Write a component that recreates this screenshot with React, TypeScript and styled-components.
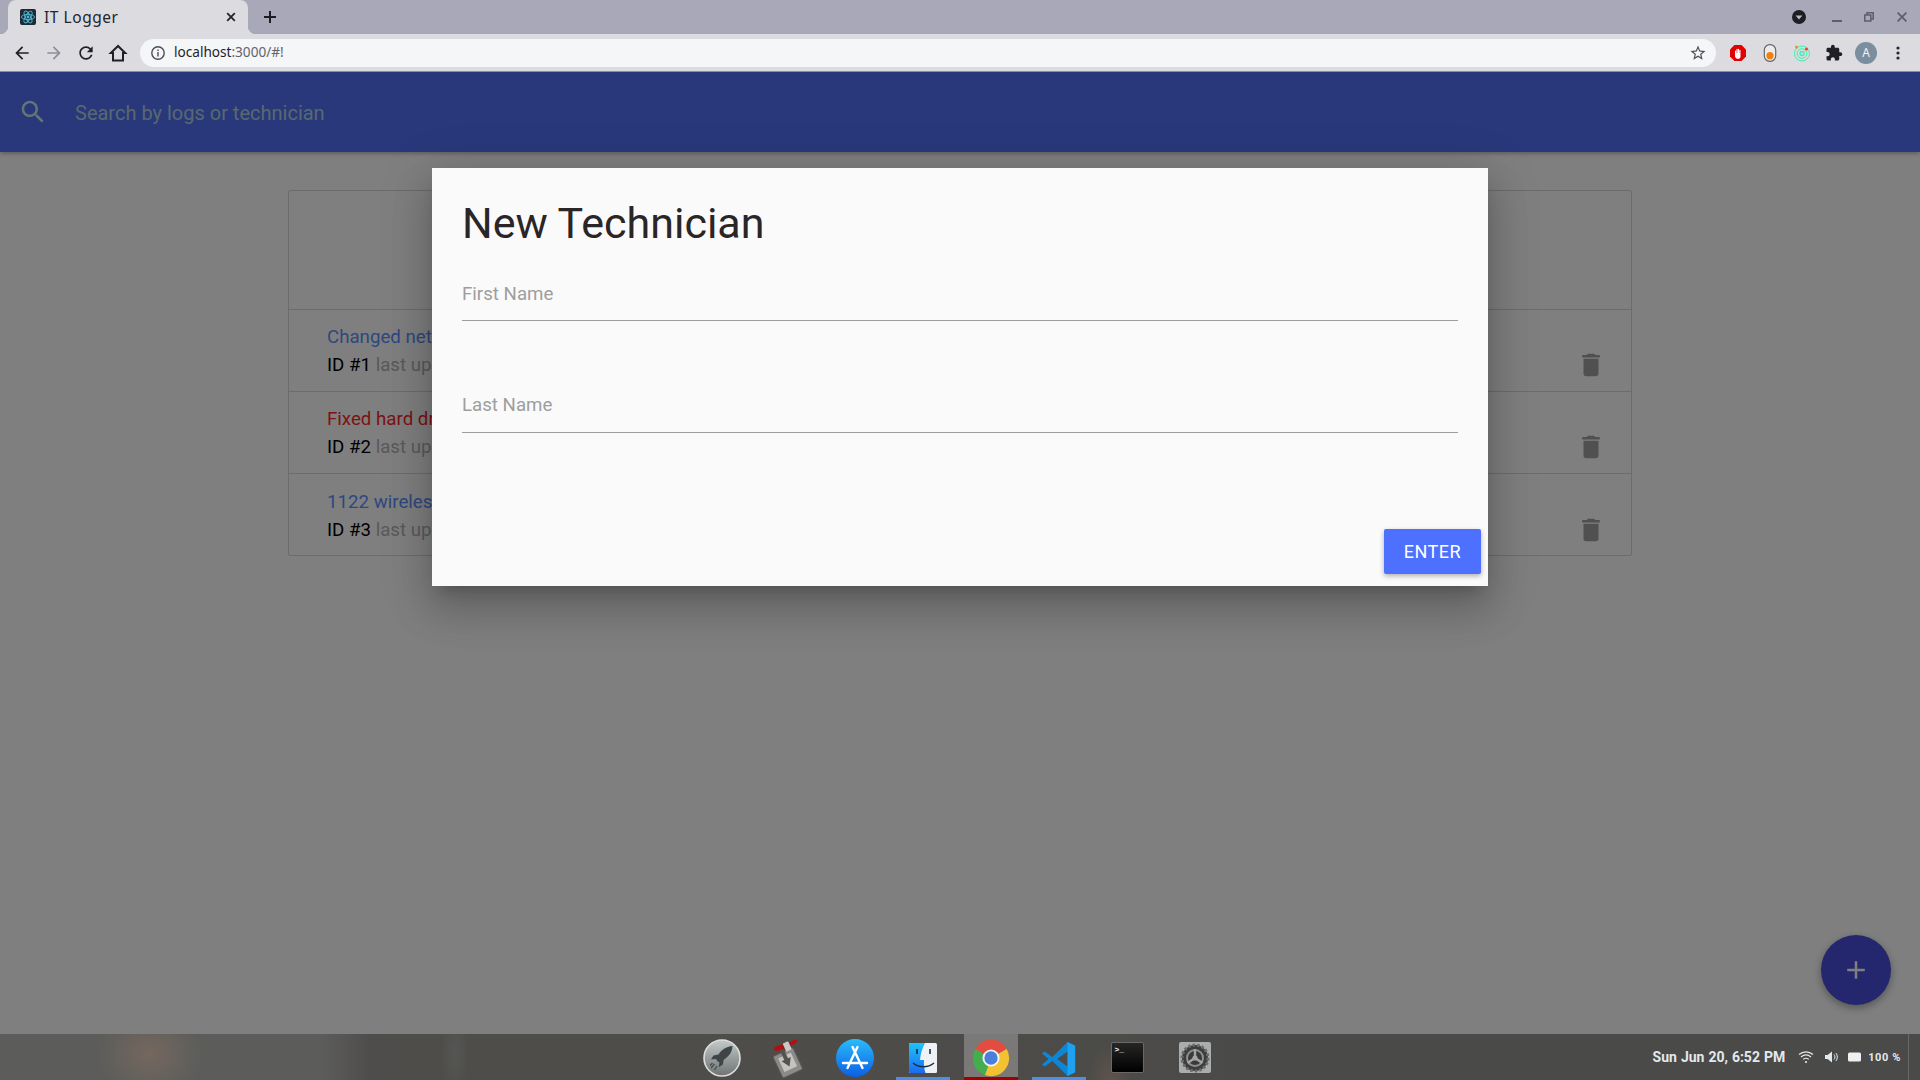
import React from "react";
import styled, { createGlobalStyle } from "styled-components";

const Global = createGlobalStyle`
  html, body { margin: 0; padding: 0; height: 100%; overflow: hidden; background: #fff; }
  * { box-sizing: border-box; }
  body { font-family: Roboto, "Liberation Sans", sans-serif; }
`;

const Screen = styled.div`
  width: 1920px;
  height: 1080px;
  display: flex;
  flex-direction: column;
  overflow: hidden;
`;

const TabStrip = styled.div`
  height: 34px;
  flex: none;
  background: #a9a8b9;
  display: flex;
  align-items: flex-end;
  padding-left: 8px;
  padding-right: 2px;
`;

const Tab = styled.div`
  position: relative;
  width: 240px;
  height: 34px;
  background: #dcdbe0;
  border-radius: 8px 8px 0 0;
  display: flex;
  align-items: center;
  padding: 0 12px;
  &::before, &::after {
    content: "";
    position: absolute;
    bottom: 0;
    width: 8px;
    height: 8px;
  }
  &::before { left: -8px; background: radial-gradient(circle at 0 0, transparent 8px, #dcdbe0 8.5px); }
  &::after { right: -8px; background: radial-gradient(circle at 100% 0, transparent 8px, #dcdbe0 8.5px); }
`;

const TabTitle = styled.span`
  flex: 1;
  margin-left: 8px;
  margin-top: -1px;
  font-family: "Noto Sans", sans-serif;
  font-size: 15.5px;
  letter-spacing: 0.55px;
  color: #25252b;
`;

const NewTab = styled.div`
  width: 32px;
  height: 34px;
  margin-left: 6px;
  display: flex;
  align-items: center;
  justify-content: center;
`;

const WindowControls = styled.div`
  margin-left: auto;
  display: flex;
  align-items: center;
  height: 34px;
`;

const WindowSlot = styled.div<{ $gap?: number }>`
  width: 32px;
  height: 34px;
  display: flex;
  align-items: center;
  justify-content: center;
  margin-right: ${(p) => p.$gap ?? 0}px;
`;

const Toolbar = styled.div`
  height: 38px;
  flex: none;
  background: #dcdbe0;
  border-bottom: 1px solid #8d8c97;
  display: flex;
  align-items: center;
  padding: 0 6px;
`;

const ToolSlot = styled.div`
  width: 32px;
  height: 32px;
  flex: none;
  display: flex;
  align-items: center;
  justify-content: center;
`;

const UrlBar = styled.div`
  flex: 1;
  height: 28px;
  margin: 0 6px;
  border-radius: 14px;
  background: #f5f6f8;
  display: flex;
  align-items: center;
  padding: 0 9px 0 10px;
  font-family: "Noto Sans", sans-serif;
  font-size: 13.6px;
  line-height: 26px;
`;

const Host = styled.span`
  margin-left: 8px;
  margin-top: -1px;
  color: #1e1e24;
`;

const UrlRest = styled.span`
  margin-top: -1px;
  color: #62626c;
`;

const UrlEnd = styled.div`
  margin-left: auto;
  display: flex;
  align-items: center;
`;

const Avatar = styled.div`
  width: 22px;
  height: 22px;
  border-radius: 50%;
  background: #7a8e9e;
  color: #f2f4f6;
  font-family: "Noto Sans", sans-serif;
  font-size: 12px;
  display: flex;
  align-items: center;
  justify-content: center;
`;

const Page = styled.main`
  position: relative;
  flex: 1;
  overflow: hidden;
  background: #fff;
`;

const Navbar = styled.header`
  height: 80px;
  background: #5070f4;
  display: flex;
  align-items: center;
  padding-left: 18px;
  box-shadow: 0 2px 4px rgba(0, 0, 0, 0.25);
`;

const SearchText = styled.span`
  margin-left: 27px;
  padding-top: 2px;
  font-size: 20px;
  color: rgb(176, 208, 224);
`;

const Collection = styled.section`
  width: 1344px;
  margin: 38px auto 0;
  border: 1px solid #d8d8d8;
  border-radius: 2px;
`;

const CollectionHeader = styled.div`
  height: 119px;
  border-bottom: 1px solid #d8d8d8;
  display: flex;
  align-items: center;
  justify-content: center;
  font-size: 34px;
`;

const LogRow = styled.div`
  height: 82px;
  padding: 13px 25px 0 38px;
  display: flex;
  justify-content: space-between;
  font-size: 18.7px;
  border-bottom: 1px solid #d8d8d8;
  &:last-child { border-bottom: 0; height: 81px; padding-top: 14px; }
`;

const LogTitle = styled.div<{ $tone: string }>`
  line-height: 28px;
  color: ${(p) => p.$tone};
`;

const LogMeta = styled.div`
  line-height: 28px;
  color: #000;
`;

const MetaGrey = styled.span`
  color: #b4b4b4;
`;

const TrashSlot = styled.div`
  margin-top: 27px;
  height: 30px;
  color: #a0a0a0;
`;

const Fab = styled.div`
  position: absolute;
  right: 29px;
  bottom: 29px;
  width: 70px;
  height: 70px;
  border-radius: 50%;
  background: #484cdc;
  display: flex;
  align-items: center;
  justify-content: center;
  box-shadow: 0 3px 8px rgba(0, 0, 0, 0.35);
`;

const Overlay = styled.div`
  position: absolute;
  inset: 0;
  background: rgba(0, 0, 0, 0.5);
`;

const Modal = styled.div`
  position: absolute;
  left: 432px;
  top: 96px;
  width: 1056px;
  height: 418px;
  background: #fafafa;
  display: flex;
  flex-direction: column;
  padding: 30px 7px 12px 30px;
  box-shadow: 0 24px 38px 3px rgba(0, 0, 0, 0.14), 0 9px 46px 8px rgba(0, 0, 0, 0.12), 0 11px 15px -7px rgba(0, 0, 0, 0.2);
`;

const ModalTitle = styled.h4`
  margin: 0 0 27px;
  font-size: 43px;
  font-weight: 400;
  line-height: 50px;
  color: #2a2527;
`;

const Field = styled.input`
  display: block;
  width: 996px;
  height: 46px;
  flex: none;
  padding: 0 0 7px;
  margin-bottom: 66px;
  border: 0;
  border-bottom: 1px solid #9e9e9e;
  background: transparent;
  font: 400 18.7px Roboto, sans-serif;
  outline: none;
  &::placeholder { color: #9e9e9e; opacity: 1; }
  & + & { margin-bottom: 0; padding-bottom: 10px; }
`;

const EnterButton = styled.button`
  margin: auto 0 0 auto;
  width: 97px;
  height: 45px;
  border: 0;
  border-radius: 2px;
  background: #4d70ff;
  color: #fff;
  font: 400 18px Roboto, sans-serif;
  letter-spacing: 0.5px;
  box-shadow: 0 2px 5px rgba(0, 0, 0, 0.3);
`;

const Dock = styled.footer`
  position: relative;
  height: 46px;
  flex: none;
  display: flex;
  background:
    radial-gradient(ellipse 52px 44px at 150px 20px, rgba(150, 118, 98, 0.42), transparent),
    radial-gradient(ellipse 14px 40px at 455px 20px, rgba(105, 120, 120, 0.22), transparent),
    radial-gradient(ellipse 22px 40px at 1110px 50px, rgba(130, 95, 80, 0.4), transparent),
    linear-gradient(90deg, #5c5d5b 0, #5c5d5b 320px, #4f4d4b 370px, #4f4d4a 700px, #4a4a48 1300px, #4a4a48 100%);
  padding-left: 692px;
  padding-right: 11px;
`;

const DockApps = styled.div`
  display: flex;
  gap: 14px;
`;

const DockTile = styled.div<{ $active?: boolean; $bar?: string }>`
  width: 54px;
  height: 46px;
  display: flex;
  align-items: flex-start;
  justify-content: center;
  padding-top: 5px;
  background: ${(p) => (p.$active ? "#7b7977" : "transparent")};
  border-bottom: 3px solid ${(p) => p.$bar ?? "transparent"};
`;

const Status = styled.div`
  margin-left: auto;
  height: 46px;
  display: flex;
  align-items: center;
  color: #e3e8ee;
  border-right: 1px solid #6a6866;
  padding-right: 7px;
`;

const Clock = styled.span`
  font: 700 14px Roboto, sans-serif;
  margin-right: 13px;
  word-spacing: 0.5px;
`;

const Percent = styled.span`
  font: 700 11px Roboto, sans-serif;
  letter-spacing: 0.6px;
  margin-left: 6px;
`;

const StatusIcon = styled.svg<{ $after?: number }>`
  margin-right: ${(p) => p.$after ?? 10}px;
`;

const RocketTile = styled(DockTile)`
  padding-left: 6px;
`;

const Md = ({ d, size = 24, color = "currentColor" }: { d: string; size?: number; color?: string }) => (
  <svg width={size} height={size} viewBox="0 0 24 24" fill={color}>
    <path d={d} />
  </svg>
);

const ICON = {
  back: "M20 11H7.83l5.59-5.59L12 4l-8 8 8 8 1.41-1.41L7.83 13H20v-2z",
  forward: "M12 4l-1.41 1.41L16.17 11H4v2h12.17l-5.58 5.59L12 20l8-8z",
  reload: "M17.65 6.35C16.2 4.9 14.21 4 12 4c-4.42 0-7.99 3.58-7.99 8s3.57 8 7.99 8c3.73 0 6.84-2.55 7.73-6h-2.08c-.82 2.33-3.04 4-5.65 4-3.31 0-6-2.69-6-6s2.69-6 6-6c1.66 0 3.14.69 4.22 1.78L13 11h7V4l-2.35 2.35z",
  star: "M22 9.24l-7.19-.62L12 2 9.19 8.63 2 9.24l5.46 4.73L5.82 21 12 17.27 18.18 21l-1.63-7.03L22 9.24zM12 15.4l-3.76 2.27 1-4.28-3.32-2.88 4.38-.38L12 6.1l1.71 4.04 4.38.38-3.32 2.88 1 4.28L12 15.4z",
  puzzle: "M20.5 11H19V7c0-1.1-.9-2-2-2h-4V3.5C13 2.12 11.88 1 10.5 1S8 2.12 8 3.5V5H4c-1.1 0-1.99.9-1.99 2v3.8H3.5c1.49 0 2.7 1.21 2.7 2.7s-1.21 2.7-2.7 2.7H2V20c0 1.1.9 2 2 2h3.8v-1.5c0-1.49 1.21-2.7 2.7-2.7 1.49 0 2.7 1.21 2.7 2.7V22H17c1.1 0 2-.9 2-2v-4h1.5c1.38 0 2.5-1.12 2.5-2.5S21.88 11 20.5 11z",
  search: "M15.5 14h-.79l-.28-.27C15.41 12.59 16 11.11 16 9.5 16 5.91 13.09 3 9.5 3S3 5.91 3 9.5 5.91 16 9.5 16c1.61 0 3.09-.59 4.23-1.57l.27.28v.79l5 4.99L20.49 19l-4.99-5zm-6 0C7.01 14 5 11.99 5 9.5S7.01 5 9.5 5 14 7.01 14 9.5 11.99 14 9.5 14z",
  trash: "M6 19c0 1.1.9 2 2 2h8c1.1 0 2-.9 2-2V7H6v12zM19 4h-3.5l-1-1h-5l-1 1H5v2h14V4z",
  add: "M19 13h-6v6h-2v-6H5v-2h6V5h2v6h6v2z",
};

const ReactFavicon = () => (
  <svg width="16" height="16" viewBox="0 0 16 16">
    <rect width="16" height="16" rx="2" fill="#1c2a33" />
    <g fill="none" stroke="#4fb9d8" strokeWidth="0.9">
      <ellipse cx="8" cy="8" rx="6.6" ry="2.6" />
      <ellipse cx="8" cy="8" rx="6.6" ry="2.6" transform="rotate(60 8 8)" />
      <ellipse cx="8" cy="8" rx="6.6" ry="2.6" transform="rotate(120 8 8)" />
    </g>
    <circle cx="8" cy="8" r="1.4" fill="#4fb9d8" />
  </svg>
);

const TabClose = () => (
  <svg width="10" height="10" viewBox="0 0 10 10" stroke="#24242a" strokeWidth="1.8">
    <path d="M1.2 1.2 8.8 8.8M8.8 1.2 1.2 8.8" />
  </svg>
);

const Plus = () => (
  <svg width="14" height="14" viewBox="0 0 14 14" stroke="#1c1c22" strokeWidth="2">
    <path d="M7 1v12M1 7h12" />
  </svg>
);

const HomeIcon = () => (
  <svg width="20" height="20" viewBox="0 0 20 20" fill="none" stroke="#1f1f25" strokeWidth="2" strokeLinejoin="miter">
    <path d="M10 3 2.8 10H5v7.5h10V10h2.2z" />
  </svg>
);

const InfoIcon = () => (
  <svg width="16" height="16" viewBox="0 0 16 16" fill="none" stroke="#4d4d55" strokeWidth="1.4">
    <circle cx="8" cy="8" r="6.2" />
    <path d="M8 7v4.4M8 4.4v1.5" />
  </svg>
);

const Opera = () => (
  <svg width="18" height="18" viewBox="0 0 18 18">
    <path d="M5.4 1h7.2L17 5.4v7.2L12.6 17H5.4L1 12.6V5.4z" fill="#e40000" />
    <path d="M6 12.5V7.2c0-1 1.1-1 1.1 0V9h.3V5.6c0-1 1.2-1 1.2 0V9h.3V5.4c0-1 1.2-1 1.2 0V9h.3V6.4c0-1 1.1-1 1.1 0v6c0 1.5-1 2.4-2.5 2.4C7.2 14.8 6.8 14 6 12.5z" fill="#fff" />
  </svg>
);

const Toggle = () => (
  <svg width="14" height="18" viewBox="0 0 12 17">
    <rect x="0.6" y="0.6" width="10.8" height="15.8" rx="5.2" fill="#eceaea" stroke="#63636a" strokeWidth="1.1" />
    <circle cx="6" cy="11" r="3.4" fill="#f08010" />
  </svg>
);

const Radar = () => (
  <svg width="18" height="18" viewBox="0 0 18 18" fill="none" stroke="#3ff0b0" strokeWidth="1">
    <circle cx="9" cy="9.5" r="7.5" />
    <circle cx="9" cy="9.5" r="4.8" />
    <circle cx="9" cy="9.5" r="2" strokeWidth="1.4" />
    <circle cx="3.5" cy="3" r="1.5" fill="#f0902a" stroke="none" />
    <circle cx="13.5" cy="5" r="1.5" fill="#e04a20" stroke="none" />
  </svg>
);

const Kebab = () => (
  <svg width="4" height="14" viewBox="0 0 4 14" fill="#26262c">
    <circle cx="2" cy="2" r="1.6" />
    <circle cx="2" cy="7" r="1.6" />
    <circle cx="2" cy="12" r="1.6" />
  </svg>
);

const ProfileBadge = () => (
  <svg width="14" height="14" viewBox="0 0 14 14">
    <circle cx="7" cy="7" r="7" fill="#1d1d22" />
    <path d="M3.6 5.4h6.8L7 9.4z" fill="#b9b8c6" />
  </svg>
);

const Minimize = () => (
  <svg width="10" height="10" viewBox="0 0 10 10" fill="#5e5e68">
    <rect y="8" width="10" height="2" />
  </svg>
);

const Restore = () => (
  <svg width="10" height="10" viewBox="0 0 10 10" fill="none" stroke="#5e5e68" strokeWidth="1.5">
    <rect x="0.8" y="3" width="6" height="6" />
    <path d="M3 3V.8h6.2V7H7" />
  </svg>
);

const CloseWin = () => (
  <svg width="10" height="10" viewBox="0 0 10 10" stroke="#5e5e68" strokeWidth="1.7">
    <path d="M.6.6 9.4 9.4M9.4.6.6 9.4" />
  </svg>
);

const RocketIcon = () => (
  <svg width="38" height="38" viewBox="0 0 38 38">
    <defs>
      <linearGradient id="rk" x1="0" y1="0" x2="0" y2="1">
        <stop offset="0" stopColor="#c2caca" />
        <stop offset="1" stopColor="#6e7273" />
      </linearGradient>
    </defs>
    <circle cx="19" cy="19" r="18" fill="url(#rk)" stroke="#dcdede" strokeWidth="1.6" />
    <path d="M29.500 7c-6.500.5-11 3.800-14 8.500l-5 1-2.500 4 5-.5c.6 1.500 1.700 2.600 3.400 3.200l-.6 5 4-2.600 1-5c5-3 8.500-7.600 8.700-13.600z" fill="#3f4446" />
    <path d="M11.500 25 8 29M14 27l-2.500 4M9.500 24 7 26.500" stroke="#4a4e50" strokeWidth="1.4" />
  </svg>
);

const TransmissionIcon = () => (
  <svg width="40" height="40" viewBox="0 0 40 40">
    <g transform="rotate(-25 20 22)">
      <rect x="9" y="12" width="22" height="24" rx="2" fill="#8c8b8a" stroke="#5a5957" />
      <rect x="13" y="16" width="14" height="15" fill="#c4c3c0" />
      <path d="M18 10h4v10h3l-5 8-5-8h3z" fill="#55534f" />
    </g>
    <path d="M8 8c4-2 8-3 11-3l3-1c3-2 6-4 8-3 1 1 0 3-3 4l-5 3c-3 1-9 3-12 4-3 0-4-2-2-4z" fill="#b01010" />
    <rect x="17" y="3" width="6" height="9" rx="1" transform="rotate(-25 20 7)" fill="#c8c8c6" />
  </svg>
);

const AppStoreIcon = () => (
  <svg width="38" height="38" viewBox="0 0 38 38">
    <defs>
      <linearGradient id="as" x1="0" y1="0" x2="0" y2="1">
        <stop offset="0" stopColor="#2bbcf9" />
        <stop offset="1" stopColor="#0b5fe6" />
      </linearGradient>
    </defs>
    <circle cx="19" cy="19" r="19" fill="url(#as)" />
    <path d="M11.500 29 21.500 8M26.500 29 16.500 8M7 24h24" stroke="#fff" strokeWidth="2.400" strokeLinecap="round" fill="none" />
  </svg>
);

const FinderIcon = () => (
  <svg width="34" height="34" viewBox="0 0 34 34" style={{ marginTop: 2 }}>
    <defs>
      <linearGradient id="fb" x1="0" y1="0" x2="0" y2="1">
        <stop offset="0" stopColor="#1fc3fb" />
        <stop offset="1" stopColor="#1a6cf0" />
      </linearGradient>
    </defs>
    <rect x="3" y="2" width="28" height="30" rx="1.5" fill="#eef2f6" />
    <path d="M3 3.500C3 2.700 3.700 2 4.500 2H19c-3 6-4.500 11-5 17h4c-.3 4 .1 9 1.500 13H4.500C3.700 32 3 31.300 3 30.500z" fill="url(#fb)" />
    <path d="M11 8v5M24 8v5" stroke="#1d2b3e" strokeWidth="1.6" />
    <path d="M7 22c6 5 15 5 21 0" fill="none" stroke="#1d2b3e" strokeWidth="1.3" />
  </svg>
);

const ChromeIcon = () => (
  <svg width="38" height="38" viewBox="0 0 40 40">
    <path d="M20 20 3.500 10.500A19 19 0 0 1 36.500 10.500z" fill="#e34c3f" />
    <path d="M20 20 36.500 10.500A19 19 0 0 1 13.500 37.900z" fill="#f2c230" />
    <path d="M20 20 13.500 37.900A19 19 0 0 1 3.500 10.500z" fill="#44ae4f" />
    <circle cx="20" cy="20" r="9" fill="#f2f4f6" />
    <circle cx="20" cy="20" r="7" fill="#4a80dc" />
  </svg>
);

const VsCodeIcon = () => (
  <svg width="38" height="38" viewBox="0 0 40 40" style={{ marginTop: 1 }}>
    <path d="M29 2 13 18 5 12 2 14l7 6-7 6 3 2 8-6 16 16 8-4V6zM29 12v16L18 20z" fill="#0e86d6" fillRule="evenodd" />
    <path d="M29 2l8 4v28l-8 4z" fill="#1fa1f1" />
  </svg>
);

const TerminalIcon = styled.div`
  width: 33px;
  height: 31px;
  margin-top: 3px;
  background: linear-gradient(#262626, #000);
  border: 1px solid #6a6866;
  border-radius: 2px;
  color: #f0f0f0;
  font: 700 8px "Liberation Mono", monospace;
  padding: 2px 3px;
`;

const SettingsIcon = () => (
  <svg width="34" height="34" viewBox="0 0 34 34" style={{ marginTop: 2 }}>
    <rect x="1" y="1" width="32" height="31" rx="2" fill="#a9adad" />
    <circle cx="17" cy="17" r="13" fill="#3d3d3d" />
    <circle cx="17" cy="17" r="13" fill="none" stroke="#6b6b6b" strokeWidth="3" strokeDasharray="2.500 2" />
    <circle cx="17" cy="17" r="9" fill="#8f8f8f" />
    <circle cx="17" cy="17" r="7" fill="#3a3a3a" />
    <path d="M17 17V8M17 17l7.500 5M17 17l-7.500 5" stroke="#a5a5a5" strokeWidth="2.400" />
    <circle cx="17" cy="17" r="2.600" fill="#a5a5a5" />
  </svg>
);

const logs = [
  { id: 1, title: "Changed network card in server rack", tone: "#5c90ff", tech: "John Doe", date: "Jun 20th 2021, 6:40 pm" },
  { id: 2, title: "Fixed hard drive on workstation 003", tone: "#f82828", tech: "Sam Smith", date: "Jun 20th 2021, 6:41 pm" },
  { id: 3, title: "1122 wireless down in the main office", tone: "#5c90ff", tech: "Sara Wilson", date: "Jun 20th 2021, 6:42 pm" },
];

export default function App() {
  return (
    <Screen>
      <Global />
      <TabStrip>
        <Tab>
          <ReactFavicon />
          <TabTitle>IT Logger</TabTitle>
          <TabClose />
        </Tab>
        <NewTab>
          <Plus />
        </NewTab>
        <WindowControls>
          <WindowSlot $gap={6}><ProfileBadge /></WindowSlot>
          <WindowSlot><Minimize /></WindowSlot>
          <WindowSlot $gap={1}><Restore /></WindowSlot>
          <WindowSlot><CloseWin /></WindowSlot>
        </WindowControls>
      </TabStrip>
      <Toolbar>
        <ToolSlot><Md d={ICON.back} size={20} color="#1f1f25" /></ToolSlot>
        <ToolSlot><Md d={ICON.forward} size={20} color="#8e8e94" /></ToolSlot>
        <ToolSlot><Md d={ICON.reload} size={20} color="#1f1f25" /></ToolSlot>
        <ToolSlot><HomeIcon /></ToolSlot>
        <UrlBar>
          <InfoIcon />
          <Host>localhost</Host>
          <UrlRest>:3000/#!</UrlRest>
          <UrlEnd><Md d={ICON.star} size={18} color="#4e4e56" /></UrlEnd>
        </UrlBar>
        <ToolSlot><Opera /></ToolSlot>
        <ToolSlot><Toggle /></ToolSlot>
        <ToolSlot><Radar /></ToolSlot>
        <ToolSlot><Md d={ICON.puzzle} size={18} color="#1f1f25" /></ToolSlot>
        <ToolSlot><Avatar>A</Avatar></ToolSlot>
        <ToolSlot><Kebab /></ToolSlot>
      </Toolbar>
      <Page>
        <Navbar>
          <Md d={ICON.search} size={30} color="rgb(200, 235, 235)" />
          <SearchText>Search by logs or technician</SearchText>
        </Navbar>
        <Collection>
          <CollectionHeader>System Logs</CollectionHeader>
          {logs.map((log) => (
            <LogRow key={log.id}>
              <div>
                <LogTitle $tone={log.tone}>{log.title}</LogTitle>
                <LogMeta>
                  ID #{log.id} <MetaGrey>last updated by {log.tech} on {log.date}</MetaGrey>
                </LogMeta>
              </div>
              <TrashSlot><Md d={ICON.trash} size={30} /></TrashSlot>
            </LogRow>
          ))}
        </Collection>
        <Fab><Md d={ICON.add} size={30} color="#fff" /></Fab>
        <Overlay />
        <Modal>
          <ModalTitle>New Technician</ModalTitle>
          <Field placeholder="First Name" readOnly />
          <Field placeholder="Last Name" readOnly />
          <EnterButton>ENTER</EnterButton>
        </Modal>
      </Page>
      <Dock>
        <DockApps>
          <RocketTile><RocketIcon /></RocketTile>
          <DockTile><TransmissionIcon /></DockTile>
          <DockTile><AppStoreIcon /></DockTile>
          <DockTile $bar="#4f8fe0"><FinderIcon /></DockTile>
          <DockTile $active $bar="#a00000"><ChromeIcon /></DockTile>
          <DockTile $bar="#4f8fe0"><VsCodeIcon /></DockTile>
          <DockTile><TerminalIcon>&gt;_</TerminalIcon></DockTile>
          <DockTile><SettingsIcon /></DockTile>
        </DockApps>
        <Status>
          <Clock>Sun Jun 20, 6:52 PM</Clock>
          <StatusIcon width="16" height="14" viewBox="0 0 16 14" fill="none" stroke="#e3e8ee" strokeWidth="1.2">
            <path d="M1 4.500c4-3.600 10-3.600 14 0M3 7c3-2.600 7-2.600 10 0M5.200 9.400c1.700-1.400 3.900-1.400 5.600 0" />
            <circle cx="8" cy="12" r="1.100" fill="#e3e8ee" stroke="none" />
          </StatusIcon>
          <StatusIcon width="14" height="14" viewBox="0 0 14 14" fill="#e3e8ee" $after={10}>
            <path d="M1 5h2.500L8 1.500v11L3.500 9H1z" />
            <path d="M10 4.500c1.300 1.500 1.300 3.500 0 5M11.800 3c2 2.400 2 5.600 0 8" fill="none" stroke="#e3e8ee" />
          </StatusIcon>
          <StatusIcon width="14" height="10" viewBox="0 0 14 10" fill="#eef0f2" $after={0}>
            <rect width="13" height="9" y="0.500" rx="1.500" />
          </StatusIcon>
          <Percent>100 %</Percent>
        </Status>
      </Dock>
    </Screen>
  );
}
